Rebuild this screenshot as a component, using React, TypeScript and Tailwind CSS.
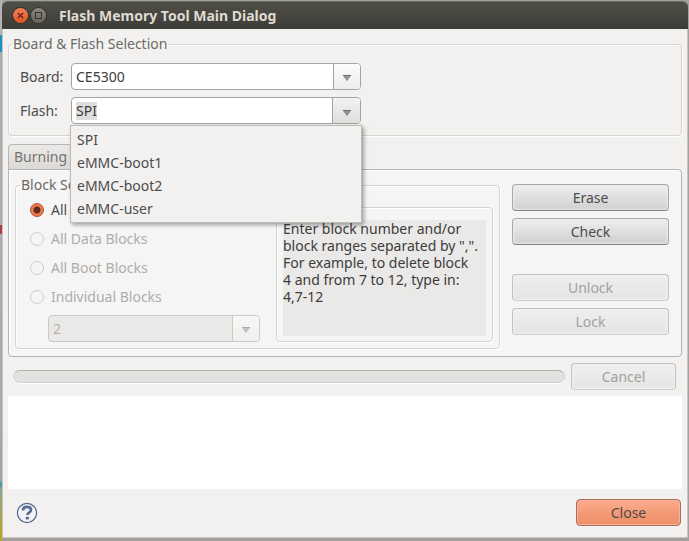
import { useEffect, useRef, useState } from "react"
import type { ReactNode } from "react"
import clsx from "clsx"

const boards = ["CE5300"]
const flashTypes = ["SPI", "eMMC-boot1", "eMMC-boot2", "eMMC-user"]

const blockOptions = [
  { id: "all", label: "All Blocks", disabled: false },
  { id: "data", label: "All Data Blocks", disabled: true },
  { id: "boot", label: "All Boot Blocks", disabled: true },
  { id: "individual", label: "Individual Blocks", disabled: true },
]

const groupBox =
  "min-w-0 rounded-[4px] border border-[#d6d4d1] shadow-[1px_1px_0_#fff,inset_1px_1px_0_#fff]"

interface DialogButtonProps {
  children: ReactNode
  primary?: boolean
  disabled?: boolean
  className?: string
}

function DialogButton({ children, primary, disabled, className }: DialogButtonProps) {
  return (
    <button
      type="button"
      disabled={disabled}
      className={clsx(
        "h-[27px] rounded-[4px] border text-center",
        primary &&
          "border-[#a3705f] bg-linear-to-b from-[#fbad90] via-[#f49a77] to-[#f18e67] shadow-[inset_0_0_0_1px_#f9b096]",
        disabled &&
          "border-[#c3c1be] border-b-[#d0cecb] bg-linear-to-b from-[#efefef] to-[#e4e4e4] text-[#a3a19e] shadow-[inset_0_0_2px_1px_#f2f2f2]",
        !primary &&
          !disabled &&
          "border-[#a9a9a9] border-b-[#858585] bg-linear-to-b from-[#efefef] to-[#cfcfcf] shadow-[inset_0_0_3px_1px_#eaeaea]",
        className,
      )}
    >
      {children}
    </button>
  )
}

function Arrow({ className }: { className?: string }) {
  return (
    <svg viewBox="0 0 8 6" className={clsx("h-[6px] w-2", className)} aria-hidden="true">
      <path d="M0.3 0.5h7.4L4 5.6z" fill="#989898" />
      <path d="M0 0.5h8" stroke="#6a6a6a" />
      <path d="M0.5 0.7L4 5.5L7.5 0.7" fill="none" stroke="#7c7c7c" strokeWidth="0.8" />
    </svg>
  )
}

// Closed drop-down: native select with the arrow box laid over its right end
function SelectBox({ id, options, disabled, label }: { id: string; options: string[]; disabled?: boolean; label?: string }) {
  return (
    <div className="relative">
      <select
        id={id}
        aria-label={label}
        disabled={disabled}
        className={clsx(
          "block h-[27px] w-full appearance-none rounded-[4px] border pl-1 opacity-100",
          disabled ? "border-[#cbc9c5] bg-[#eae9e7] text-[#b5b2ae]" : "border-[#a5a4a2] bg-white text-[#3c3c3c]",
        )}
      >
        {options.map((option) => (
          <option key={option}>{option}</option>
        ))}
      </select>
      <span
        className={clsx(
          "pointer-events-none absolute inset-y-px right-px flex w-[27px] items-center justify-center rounded-r-[3px] border-l bg-linear-to-b pt-0.5",
          disabled ? "border-[#cbc9c5] from-[#f7f7f6] to-[#f0efed]" : "border-[#a5a4a2] from-[#fcfcfc] to-[#ededec]",
        )}
      >
        <Arrow className={disabled ? "opacity-50" : ""} />
      </span>
    </div>
  )
}

function FlashCombo() {
  const [value, setValue] = useState("SPI")
  const [open, setOpen] = useState(true)
  const inputRef = useRef<HTMLInputElement>(null)

  useEffect(() => {
    inputRef.current?.focus()
    inputRef.current?.select()
  }, [])

  return (
    <div className="relative">
      <div className="flex h-[27px] overflow-hidden rounded-[4px] border border-[#a5a4a2] bg-white">
        <input
          id="flash"
          ref={inputRef}
          role="combobox"
          aria-expanded={open}
          aria-controls="flash-list"
          value={value}
          onChange={(e) => setValue(e.target.value)}
          className="min-w-0 flex-1 pl-1 text-[#3c3c3c] caret-transparent outline-none selection:bg-[#dfdedc] selection:text-[#3c3c3c]"
        />
        <button
          type="button"
          aria-label="Show flash types"
          onClick={() => setOpen(!open)}
          className="flex w-7 items-center justify-center border-l border-[#a5a4a2] bg-linear-to-b from-[#f3f3f2] to-[#dededc] pt-1"
        >
          <Arrow />
        </button>
      </div>
      {open && (
        <ul
          id="flash-list"
          role="listbox"
          className="absolute inset-x-[-1px] top-full z-10 mt-px border border-[#bdbbb7] bg-[#f2f1f0] py-0.5 shadow-[2px_2px_4px_rgba(0,0,0,0.35)]"
        >
          {flashTypes.map((type) => (
            <li
              key={type}
              role="option"
              aria-selected={type === value}
              onClick={() => {
                setValue(type)
                setOpen(false)
              }}
              className="px-1.5 leading-[23px]"
            >
              {type}
            </li>
          ))}
        </ul>
      )}
    </div>
  )
}

function TitleBar() {
  return (
    <header className="flex h-7 items-center rounded-t-[6px] border-t border-[#6a695f] bg-linear-to-b from-[#4f4e47] to-[#3d3c37] pl-[11px]">
      <button
        type="button"
        aria-label="Close window"
        className="flex size-[15px] items-center justify-center rounded-full bg-linear-to-b from-[#f58055] to-[#e2521f] shadow-[0_0_0_1px_#37352f]"
      >
        <svg viewBox="0 0 7 7" className="size-[7px]" aria-hidden="true">
          <path d="M0.8 0.8l5.4 5.4M6.2 0.8L0.8 6.2" stroke="#4a1f10" strokeWidth="1.2" />
        </svg>
      </button>
      <button
        type="button"
        aria-label="Maximize window"
        className="ml-[3px] flex size-[15px] items-center justify-center rounded-full bg-linear-to-b from-[#8a887f] to-[#66645d] shadow-[0_0_0_1px_#37352f]"
      >
        <svg viewBox="0 0 7 7" className="size-[7px]" aria-hidden="true">
          <rect x="0.5" y="0.5" width="6" height="6" fill="none" stroke="#35342f" />
        </svg>
      </button>
      <h1 className="ml-[13px] text-[14px] font-bold text-[#dfdbd2]">Flash Memory Tool Main Dialog</h1>
    </header>
  )
}

export default function App() {
  const [block, setBlock] = useState("all")

  return (
    <div className="flex min-h-screen flex-col bg-[#a3a19e] bg-[linear-gradient(#b4b4b4_35px,#1a93c4_35px,#1a93c4_52px,#adadad_52px,#adadad_225px,#a8403c_225px,#a8403c_234px,#a9adb4_234px,#a5a5a5_480px,#3c9aa0_484px,#8fa58f_490px,#b5a52c_530px)] bg-[length:2px_100%] bg-no-repeat pt-px pr-px pb-[3px] pl-0.5 font-['Noto_Sans','Open_Sans',sans-serif] text-[14px] leading-[18px] text-[#4c4c4c]">
      <TitleBar />
      <main className="flex flex-1 flex-col border-x border-b border-[#c9c5bf] bg-[#f2f1f0] px-[5px] pt-1.5 pb-[11px]">
        <fieldset className={clsx(groupBox, "px-[11px] pb-[11px]")}>
          <legend className="-ml-2 px-px text-[#6c6a67]">Board &amp; Flash Selection</legend>
          <div className="mt-2.5 grid grid-cols-[44px_290px] items-center gap-x-[7px] gap-y-[7px]">
            <label htmlFor="board">Board:</label>
            <SelectBox id="board" options={boards} />
            <label htmlFor="flash">Flash:</label>
            <FlashCombo />
          </div>
        </fieldset>

        <div role="tablist" className="mt-2 flex">
          <button
            type="button"
            role="tab"
            aria-selected="true"
            className="h-[25px] rounded-t-[4px] border border-b-0 border-[#bab8b4] bg-linear-to-b from-[#ebeae8] to-[#dcdad7] px-[5px] text-[#77746f]"
          >
            Burning
          </button>
        </div>

        <section className="flex gap-3 rounded-[4px] rounded-tl-none border border-[#b5b3af] bg-[#f5f5f5] pt-1.5 pr-3 pb-[7px] pl-1.5 shadow-[inset_1px_1px_0_#fff]">
          <fieldset className={clsx(groupBox, "flex-1 pr-1.5 pb-1.5 pl-3.5")}>
            <legend className="-ml-2.5 px-px text-[#6c6a67]">Block Selection</legend>
            <div className="flex gap-4 pt-px">
              <div className="min-w-0 flex-1">
                {blockOptions.map((option) => (
                  <label
                    key={option.id}
                    className={clsx("flex h-[29px] items-center gap-[7px]", option.disabled && "text-[#b0ada9]")}
                  >
                    <input
                      type="radio"
                      name="block"
                      checked={block === option.id}
                      disabled={option.disabled}
                      onChange={() => setBlock(option.id)}
                      className="size-[14px] appearance-none rounded-full border border-[#cfcdca] bg-[#f5f5f5] checked:border-[#a5502f] checked:bg-[radial-gradient(circle,#5a2e20_0_3px,#f0794d_4px)]"
                    />
                    {option.label}
                  </label>
                ))}
                <div className="mt-1 ml-[18px]">
                  <SelectBox id="block-number" label="Block number" options={["2"]} disabled />
                </div>
              </div>
              <div className={clsx(groupBox, "mt-3 flex w-[217px] px-1.5 pt-3 pb-[5px]")}>
                <p className="flex-1 bg-[#eae9e7] leading-[17px] text-[#3c3c3c]">
                  Enter block number and/or
                  <br />
                  block ranges separated by ",".
                  <br />
                  For example, to delete block
                  <br />
                  4 and from 7 to 12, type in:
                  <br />
                  4,7-12
                </p>
              </div>
            </div>
          </fieldset>

          <div className="mt-2 flex w-[157px] flex-col gap-[7px]">
            <DialogButton>Erase</DialogButton>
            <DialogButton>Check</DialogButton>
            <DialogButton disabled className="mt-[22px]">
              Unlock
            </DialogButton>
            <DialogButton disabled>Lock</DialogButton>
          </div>
        </section>

        <div className="mt-1.5 flex items-center gap-1.5 pr-1.5 pl-[5px]">
          <div
            role="progressbar"
            aria-label="Progress"
            aria-valuenow={0}
            className="h-[13px] flex-1 rounded-full border border-[#d3d1ce] border-t-[#b3b1ae] bg-[#e2e1df] shadow-[0_1px_0_#fff]"
          />
          <DialogButton disabled className="w-[105px]">
            Cancel
          </DialogButton>
        </div>

        <textarea aria-label="Log" readOnly className="mt-1.5 min-h-20 flex-1 resize-none bg-white outline-none" />

        <footer className="mt-2.5 flex items-center justify-between pr-px pl-2">
          <button type="button" aria-label="Help">
            <svg viewBox="0 0 22 22" className="size-[22px]" aria-hidden="true">
              <circle cx="11" cy="11" r="9.6" fill="#f3f3f6" stroke="#566a8f" strokeWidth="1.2" />
              <path
                d="M7 8.4C7 6 8.6 4.9 11 4.9s4 1.1 4 3c0 2.7-3.7 2.7-3.7 5.2"
                fill="none"
                stroke="#5b6d94"
                strokeWidth="2.7"
              />
              <rect x="9.7" y="14.8" width="3.2" height="2.8" rx="0.8" fill="#5b6d94" />
            </svg>
          </button>
          <DialogButton primary className="w-[105px]">
            Close
          </DialogButton>
        </footer>
      </main>
    </div>
  )
}
